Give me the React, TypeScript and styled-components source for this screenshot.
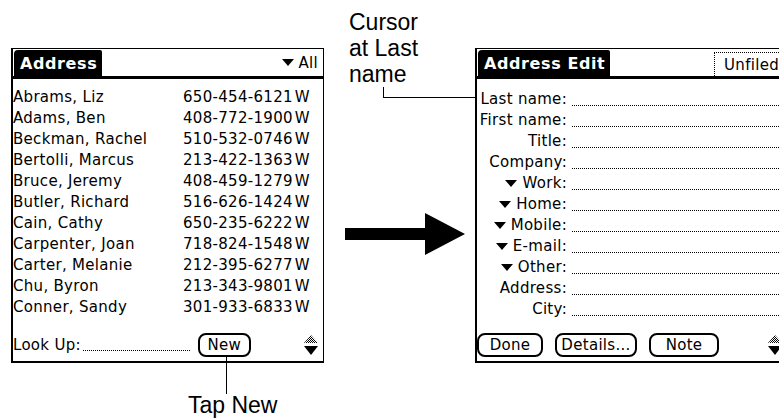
import React from "react";
import styled, { createGlobalStyle } from "styled-components";

const GlobalStyle = createGlobalStyle`
  html, body {
    margin: 0;
    padding: 0;
    background: #fff;
  }
  body {
    font-family: "DejaVu Sans", sans-serif;
    color: #000;
  }
`;

const contacts = [
    ["Abrams, Liz", "650-454-6121"],
    ["Adams, Ben", "408-772-1900"],
    ["Beckman, Rachel", "510-532-0746"],
    ["Bertolli, Marcus", "213-422-1363"],
    ["Bruce, Jeremy", "408-459-1279"],
    ["Butler, Richard", "516-626-1424"],
    ["Cain, Cathy", "650-235-6222"],
    ["Carpenter, Joan", "718-824-1548"],
    ["Carter, Melanie", "212-395-6277"],
    ["Chu, Byron", "213-343-9801"],
    ["Conner, Sandy", "301-933-6833"],
];

const fields = [
    { label: "Last name:", caret: false },
    { label: "First name:", caret: false },
    { label: "Title:", caret: false },
    { label: "Company:", caret: false },
    { label: "Work:", caret: true },
    { label: "Home:", caret: true },
    { label: "Mobile:", caret: true },
    { label: "E-mail:", caret: true },
    { label: "Other:", caret: true },
    { label: "Address:", caret: false },
    { label: "City:", caret: false },
];

const ScrollArrows: React.FC<{ id: string }> = ({ id }) => (
    <svg width="14" height="22" viewBox="0 0 14 22">
        <defs>
            <pattern id={id} width="2" height="2" patternUnits="userSpaceOnUse">
                <rect width="1" height="1" fill="#000" />
                <rect x="1" y="1" width="1" height="1" fill="#000" />
            </pattern>
        </defs>
        <polygon points="7,1 14,9 0,9" fill={`url(#${id})`} />
        <polygon points="0,12 14,12 7,21" fill="#000" />
    </svg>
);

export default function App() {
    return (
        <>
            <GlobalStyle />
            <Page>
                <LeftColumn>
                    <Screen>
                        <TitleBar>
                            <TitleTab>Address</TitleTab>
                            <Category>
                                <Caret />
                                All
                            </Category>
                        </TitleBar>
                        <List>
                            {contacts.map(([name, phone]) => (
                                <ContactRow key={name}>
                                    <span>{name}</span>
                                    <Phone>
                                        {phone}
                                        <PhoneKind>W</PhoneKind>
                                    </Phone>
                                </ContactRow>
                            ))}
                        </List>
                        <Footer>
                            <span>Look Up:</span>
                            <LookUpField />
                            <PalmButton $width={53}>New</PalmButton>
                            <ArrowSlot>
                                <ScrollArrows id="dither-left" />
                            </ArrowSlot>
                        </Footer>
                    </Screen>
                    <BelowCallout>
                        <CalloutStem />
                        <CalloutText>Tap New</CalloutText>
                    </BelowCallout>
                </LeftColumn>

                <MiddleColumn>
                    <CalloutText>
                        Cursor
                        <br />
                        at Last
                        <br />
                        name
                    </CalloutText>
                    <Elbow />
                    <BigArrow width="120" height="42" viewBox="0 0 120 42">
                        <polygon points="0,15 80,15 80,0 120,21 80,42 80,27 0,27" fill="#000" />
                    </BigArrow>
                </MiddleColumn>

                <RightColumn>
                    <Screen>
                        <TitleBar>
                            <TitleTab>Address Edit</TitleTab>
                            <Unfiled>Unfiled</Unfiled>
                        </TitleBar>
                        <Form>
                            {fields.map((f) => (
                                <FieldRow key={f.label}>
                                    <FieldLabel>
                                        {f.caret && <Caret />}
                                        {f.label}
                                    </FieldLabel>
                                    <DottedField />
                                </FieldRow>
                            ))}
                        </Form>
                        <Footer>
                            <ButtonGroup>
                                <PalmButton $width={66}>Done</PalmButton>
                                <PalmButton $width={82}>Details...</PalmButton>
                                <PalmButton $width={70}>Note</PalmButton>
                            </ButtonGroup>
                            <ArrowSlot>
                                <ScrollArrows id="dither-right" />
                            </ArrowSlot>
                        </Footer>
                    </Screen>
                </RightColumn>
            </Page>
        </>
    );
}

const Page = styled.div`
  width: 779px;
  height: 418px;
  overflow: hidden;
  display: flex;
  align-items: flex-start;
  background: #fff;
`;

const LeftColumn = styled.div`
  flex: none;
  width: 313px;
  margin-left: 11px;
  padding-top: 48px;
  display: flex;
  flex-direction: column;
`;

const MiddleColumn = styled.div`
  flex: none;
  width: 151px;
  display: flex;
  flex-direction: column;
  padding-top: 9px;
  padding-left: 25px;
  box-sizing: border-box;
`;

const RightColumn = styled.div`
  flex: none;
  width: 313px;
  padding-top: 48px;
`;

const Screen = styled.div`
  width: 313px;
  height: 315px;
  box-sizing: border-box;
  border-top: 1px solid #000;
  border-left: 2px solid #000;
  border-right: 1px solid #000;
  border-bottom: 2px solid #000;
  display: flex;
  flex-direction: column;
  font-family: "DejaVu Sans", sans-serif;
  font-size: 15px;
  letter-spacing: 0.3px;
`;

const TitleBar = styled.div`
  flex: none;
  height: 27px;
  display: flex;
  align-items: stretch;
  border-bottom: 3px solid #000;
`;

const TitleTab = styled.div`
  margin: 1px 0 0 1px;
  padding: 0 5px 0 6px;
  display: flex;
  align-items: center;
  background: #000;
  color: #fff;
  font-weight: bold;
  font-size: 16px;
  letter-spacing: 0.6px;
  border-radius: 4px 2px 0 0;
`;

const Category = styled.div`
  margin-left: auto;
  padding-right: 5px;
  display: flex;
  align-items: center;
`;

const Caret = styled.span`
  display: inline-block;
  width: 0;
  height: 0;
  border-left: 6px solid transparent;
  border-right: 6px solid transparent;
  border-top: 7px solid #000;
  margin-right: 5px;
  vertical-align: middle;
`;

const Unfiled = styled.div`
  margin-left: auto;
  margin-top: 3px;
  padding: 0 8px 0 9px;
  display: flex;
  align-items: center;
  border: 1px dotted #000;
  border-bottom: none;
  border-right: none;
`;

const List = styled.div`
  padding-top: 8px;
  display: flex;
  flex-direction: column;
`;

const ContactRow = styled.div`
  height: 21px;
  line-height: 21px;
  display: flex;
  justify-content: space-between;
  padding-right: 13px;
  white-space: nowrap;
`;

const Phone = styled.span`
  display: flex;
`;

const PhoneKind = styled.span`
  margin-left: 2px;
`;

const Footer = styled.div`
  flex: none;
  margin-top: auto;
  margin-bottom: 4px;
  height: 24px;
  display: flex;
  align-items: center;
`;

const LookUpField = styled.span`
  width: 108px;
  height: 1px;
  margin: 10px 7px 0 2px;
  background: repeating-linear-gradient(to right, #000 0 1px, transparent 1px 2px);
`;

const PalmButton = styled.div<{ $width: number }>`
  width: ${(p) => p.$width}px;
  height: 24px;
  box-sizing: border-box;
  border: 2px solid #000;
  border-radius: 8px;
  display: flex;
  align-items: center;
  justify-content: center;
`;

const ButtonGroup = styled.div`
  display: flex;
  gap: 12px;
`;

const ArrowSlot = styled.div`
  margin-left: auto;
  margin-right: 5px;
  display: flex;
`;

const Form = styled.div`
  padding-top: 10px;
  display: flex;
  flex-direction: column;
`;

const FieldRow = styled.div`
  height: 21px;
  display: flex;
  align-items: stretch;
`;

const FieldLabel = styled.div`
  width: 90px;
  flex: none;
  line-height: 21px;
  text-align: right;
  white-space: nowrap;
`;

const DottedField = styled.div`
  flex: 1;
  margin: 0 0 4px 5px;
  background: repeating-linear-gradient(to right, #000 0 1px, transparent 1px 2px) left bottom / 100% 1px no-repeat;
`;

const CalloutText = styled.div`
  font-family: "Liberation Sans", Arial, sans-serif;
  font-size: 23px;
  line-height: 26px;
  white-space: nowrap;
`;

const Elbow = styled.div`
  margin-left: 34px;
  height: 10px;
  border-left: 1px solid #000;
  border-bottom: 1px solid #000;
`;

const BigArrow = styled.svg`
  margin-top: 115px;
  margin-left: -4px;
  display: block;
`;

const BelowCallout = styled.div`
  margin-left: 177px;
  display: flex;
  flex-direction: column;
  align-items: flex-start;
  ${CalloutText} {
    line-height: 23px;
  }
`;

const CalloutStem = styled.div`
  width: 1px;
  height: 38px;
  margin-top: -7px;
  margin-left: 38px;
  background: #000;
`;
